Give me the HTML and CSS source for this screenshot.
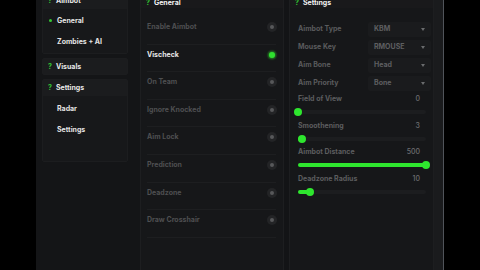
FILE: index.html
```html
<!DOCTYPE html>
<html>
<head>
<meta charset="utf-8">
<link rel="stylesheet" href="styles.css">
</head>
<body>
<div class="app">
  <aside class="sidebar">
    <div class="group group-aimbot">
      <div class="group-head"><span class="q">?</span>Aimbot</div>
      <div class="nav-list">
        <div class="nav-item active"><span class="dot"></span>General</div>
        <div class="nav-item">Zombies + AI</div>
      </div>
    </div>
    <div class="group group-visuals">
      <div class="group-head"><span class="q">?</span>Visuals</div>
    </div>
    <div class="group group-settings">
      <div class="group-head"><span class="q">?</span>Settings</div>
      <div class="nav-list">
        <div class="nav-item">Radar</div>
        <div class="nav-item">Settings</div>
      </div>
    </div>
  </aside>

  <section class="panel general">
    <div class="panel-head"><span class="q">?</span>General</div>
    <div class="toggle-row"><span>Enable Aimbot</span><span class="toggle"></span></div>
    <div class="toggle-row on"><span>Vischeck</span><span class="toggle"></span></div>
    <div class="toggle-row"><span>On Team</span><span class="toggle"></span></div>
    <div class="toggle-row"><span>Ignore Knocked</span><span class="toggle"></span></div>
    <div class="toggle-row"><span>Aim Lock</span><span class="toggle"></span></div>
    <div class="toggle-row"><span>Prediction</span><span class="toggle"></span></div>
    <div class="toggle-row"><span>Deadzone</span><span class="toggle"></span></div>
    <div class="toggle-row"><span>Draw Crosshair</span><span class="toggle"></span></div>
  </section>

  <section class="panel settings">
    <div class="panel-head"><span class="q">?</span>Settings</div>
    <div class="select-row"><span>Aimbot Type</span><div class="select">KBM<span class="caret"></span></div></div>
    <div class="select-row"><span>Mouse Key</span><div class="select">RMOUSE<span class="caret"></span></div></div>
    <div class="select-row"><span>Aim Bone</span><div class="select">Head<span class="caret"></span></div></div>
    <div class="select-row"><span>Aim Priority</span><div class="select">Bone<span class="caret"></span></div></div>
    <div class="slider first">
      <div class="slider-top"><span>Field of View</span><span class="val">0</span></div>
      <div class="track"><div class="fill" style="width:0%"></div></div>
    </div>
    <div class="slider">
      <div class="slider-top"><span>Smoothening</span><span class="val">3</span></div>
      <div class="track"><div class="fill" style="width:3%"></div></div>
    </div>
    <div class="slider">
      <div class="slider-top"><span>Aimbot Distance</span><span class="val">500</span></div>
      <div class="track"><div class="fill" style="width:100%"></div></div>
    </div>
    <div class="slider">
      <div class="slider-top"><span>Deadzone Radius</span><span class="val">10</span></div>
      <div class="track"><div class="fill" style="width:9%"></div></div>
    </div>
  </section>
  <div class="scroll-strip"></div>
</div>
</body>
</html>
```

FILE: styles.css
```css
* { box-sizing: border-box; }
html, body {
  margin: 0;
  padding: 0;
  background: #000;
  width: 480px;
  height: 270px;
  overflow: hidden;
  font-family: Inter, "Noto Sans", sans-serif;
  font-weight: 700;
  font-size: 7px;
  line-height: 8px;
}
.app {
  margin-left: 36px;
  width: 408px;
  height: 270px;
  background: #131416;
  border-right: 1px solid #50545a;
  display: flex;
  overflow: hidden;
}
.q { color: #32c832; margin-right: 4px; font-size: 7px; }

/* sidebar */
.sidebar {
  width: 104px;
  flex: none;
  padding: 0 6px;
  background: #141517;
  display: flex;
  flex-direction: column;
  gap: 4px;
}
.group {
  width: 86px;
  background: #17181a;
  border: 1px solid #1c1d1f;
  border-radius: 2px;
  color: #e6e6e6;
}
.group-aimbot { margin-top: -8px; height: 62px; }
.group-aimbot .nav-list { padding-top: 1px; }
.group-visuals { height: 17px; }
.group-visuals .group-head { height: 15px; }
.group-settings { height: 83px; }
.group-settings .nav-list { padding-top: 2.5px; }
.group-head {
  height: 16px;
  display: flex;
  align-items: center;
  padding-left: 5px;
  background: #1b1c1e;
  color: #e8e8e8;
}
.nav-item {
  height: 21px;
  display: flex;
  align-items: center;
  padding-left: 14px;
  color: #e4e4e4;
  position: relative;
}
.nav-item .dot {
  position: absolute;
  left: 6px;
  top: 9px;
  width: 3px;
  height: 3px;
  border-radius: 50%;
  background: #34c834;
}

/* panels */
.panel {
  flex: none;
  background: #161719;
  border-left: 1px solid #1d1e20;
  border-right: 1px solid #1d1e20;
  display: flex;
  flex-direction: column;
}
.general { width: 144px; }
.settings { width: 145px; margin-left: 5px; }
.panel-head {
  height: 11px;
  margin-top: -3px;
  padding-left: 5px;
  display: flex;
  align-items: center;
  color: #f2f2f2;
  background: #19191b;
}
.general .panel-head { margin-bottom: 9px; }
.toggle-row {
  height: 27.6px;
  margin: 0 7px 0 6px;
  padding-top: 6px;
  display: flex;
  justify-content: space-between;
  color: #4e4f51;
  border-bottom: 1px solid #1d1e20;
}
.toggle-row.on { color: #e8e8e8; }
.toggle {
  width: 10px;
  height: 10px;
  border-radius: 50%;
  background: #232426;
  margin-top: -1px;
  margin-right: -1px;
  display: flex;
  align-items: center;
  justify-content: center;
}
.toggle::after {
  content: "";
  width: 4px;
  height: 4px;
  border-radius: 50%;
  background: #57585a;
}
.on .toggle { background: #1b2a1b; }
.on .toggle::after {
  width: 6px;
  height: 6px;
  background: #2fe02f;
  box-shadow: 0 0 3px #2fe02f;
}

/* settings column */
.settings .panel-head { margin-bottom: 12px; }
.select-row {
  height: 18px;
  padding: 0 2px 0 8px;
  display: flex;
  align-items: center;
  justify-content: space-between;
  color: #5a5b5d;
}
.select {
  width: 63px;
  height: 15px;
  background: #1a1b1d;
  border-radius: 2px;
  padding: 0 6px;
  display: flex;
  align-items: center;
  justify-content: space-between;
  color: #5e5f61;
}
.caret {
  width: 0;
  height: 0;
  border-left: 2.5px solid transparent;
  border-right: 2.5px solid transparent;
  border-top: 3px solid #6a6b6d;
}
.slider {
  height: 26.5px;
  padding: 0 8px;
  display: flex;
  flex-direction: column;
}
.slider.first { margin-top: 1px; }
.slider-top {
  display: flex;
  justify-content: space-between;
  color: #5c5d5f;
  padding-right: 5px;
  margin-top: 2px;
}
.slider-top .val { color: #6c6d6f; font-weight: 500; }
.track {
  margin-top: 7px;
  height: 4px;
  width: 128px;
  background: #1c1d1f;
  border-radius: 2px;
  position: relative;
}
.fill {
  height: 4px;
  background: #2ee62e;
  border-radius: 2px;
  position: relative;
}
.fill::after {
  content: "";
  position: absolute;
  right: -4px;
  top: -2px;
  width: 8px;
  height: 8px;
  border-radius: 50%;
  background: #2ee62e;
}
.scroll-strip {
  flex: 1;
  background: #1a1b1d;
}
```
